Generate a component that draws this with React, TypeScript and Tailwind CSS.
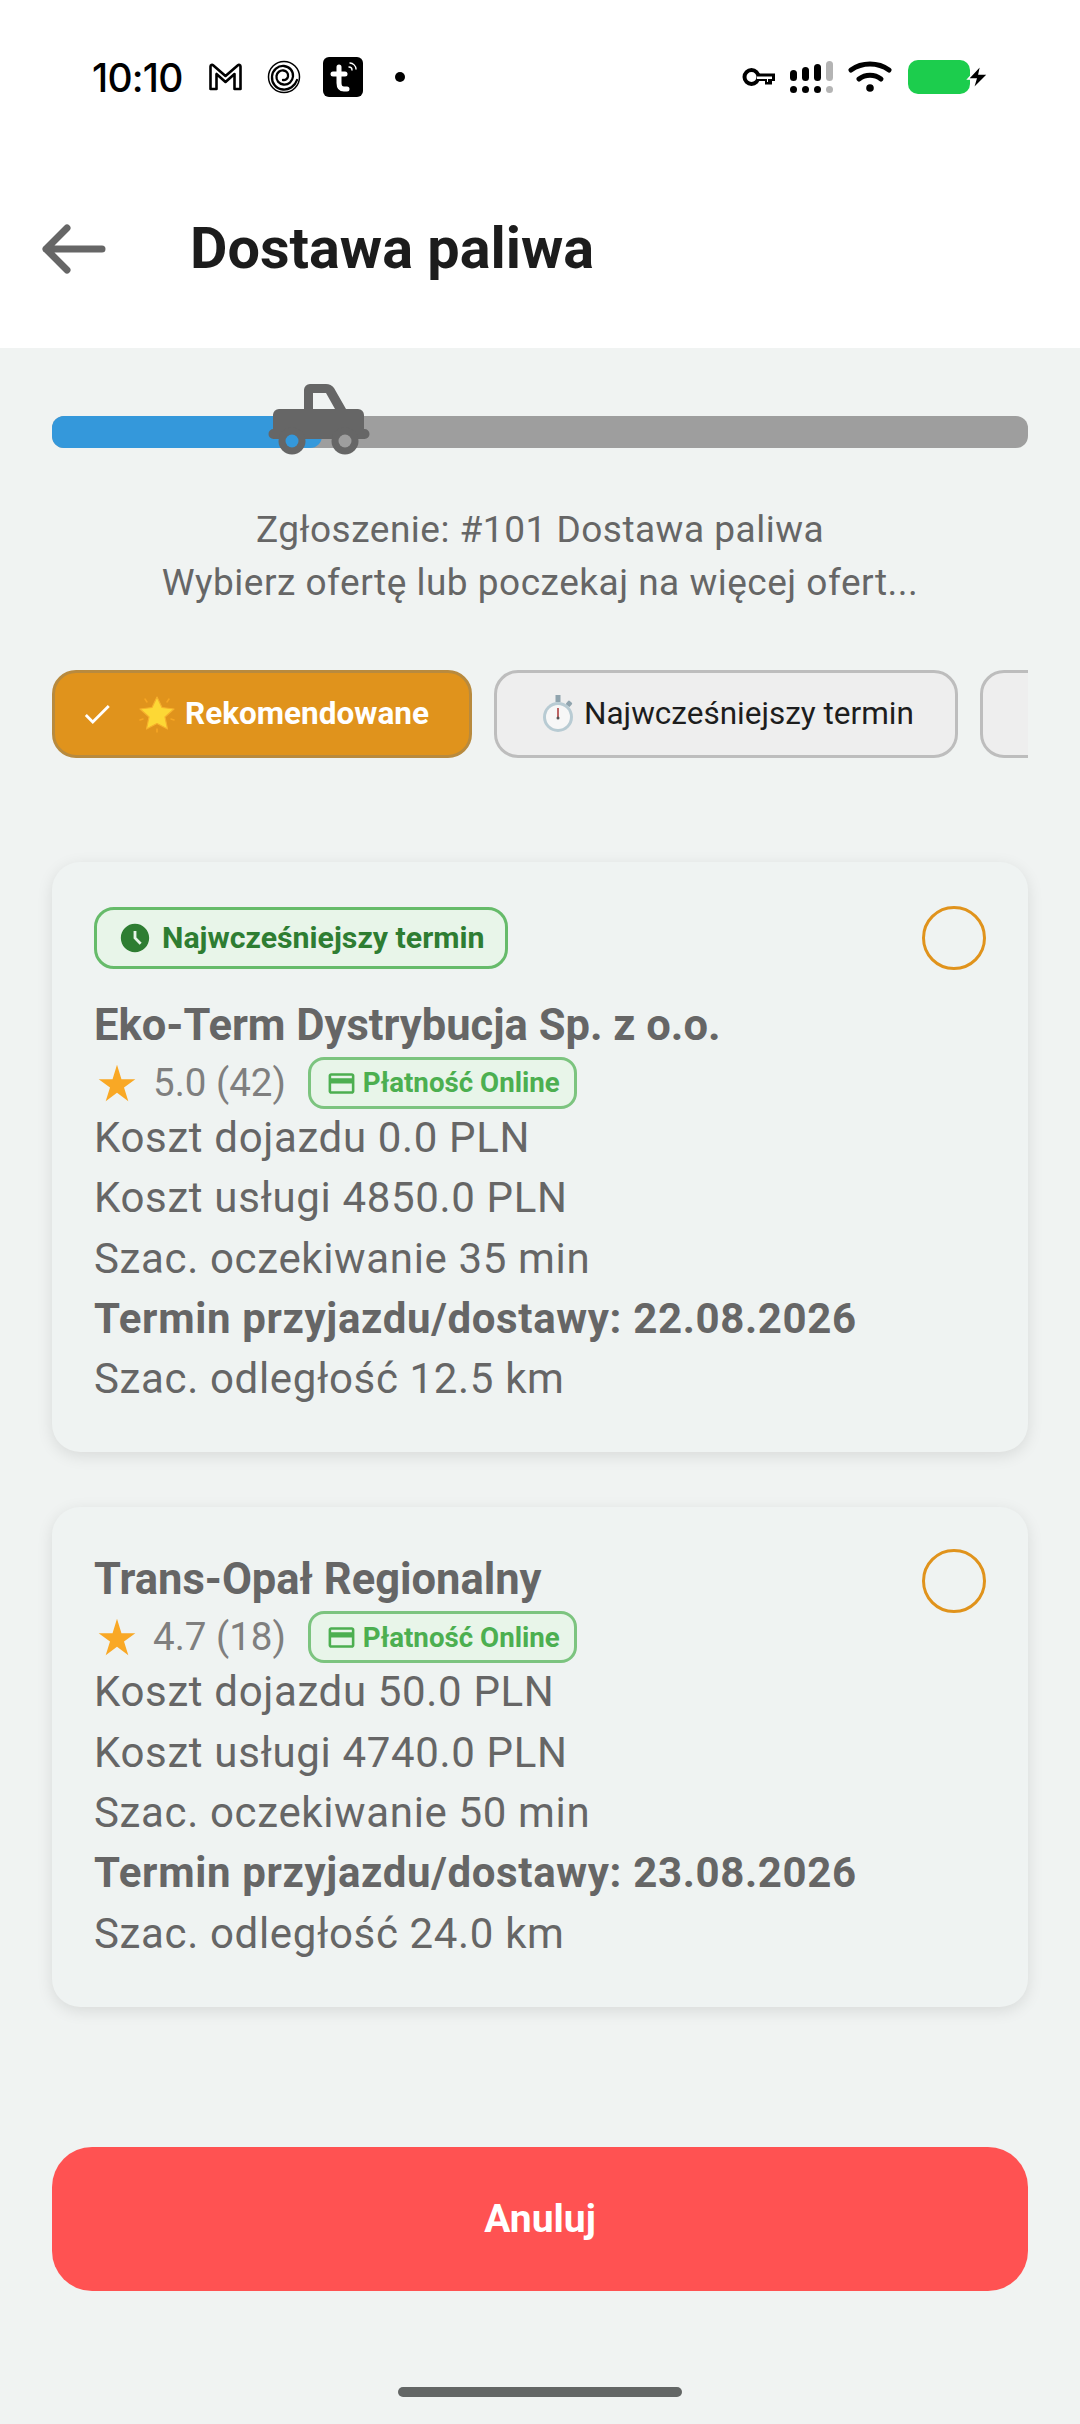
import React from "react";
import { MdAccessTimeFilled, MdStarRate, MdOutlineCreditCard, MdCheck } from "react-icons/md";

const roboto = "font-['Roboto',sans-serif]";

function StatusBar() {
  return (
    <div className="h-[124px] pt-[54px] pl-[92px] pr-[90px] flex items-start justify-between bg-white">
      <div className="flex items-center h-[46px] text-black">
        <span className="font-['Inter',sans-serif] text-[39px] font-medium tracking-[-0.8px] leading-none w-[115px]">10:10</span>
        <svg width="37" height="30" viewBox="0 0 36 30">
          <path d="M3 27V4.500c0-1.500 1.600-2 2.600-1.200L18 14 30.400 3.300C31.400 2.500 33 3 33 4.500V27h-6V12l-9 8-9-8v15z" fill="none" stroke="#000" strokeWidth="2.600" strokeLinejoin="round" />
        </svg>
        <svg width="34" height="34" viewBox="0 0 34 34" className="ml-[23px]" fill="none" stroke="#000">
          <circle cx="17" cy="17" r="15.500" strokeWidth="1.500" />
          <path d="M30 20c-2 6-8 10-14 9.500C9 29 4.500 23 5 16.500 5.500 10 11 5.500 17 6c5.500.5 9.500 5 9 10.500-.5 5-4.500 8.500-9.500 8-4.500-.5-7.500-4-7-8.500.5-3.500 3.500-6 7-5.500 3 .5 5 3 4.500 6-.5 2.500-2.500 4-5 3.500" strokeWidth="2.300" strokeLinecap="round" />
        </svg>
        <div className="ml-[22px] w-[40px] h-[40px] rounded-[6px] bg-black">
          <svg width="40" height="40" viewBox="0 0 40 40" fill="none" stroke="#fff" strokeLinecap="round">
            <path d="M16 10v16c0 4 2 6 5 6h3" strokeWidth="5" />
            <path d="M10 17h12" strokeWidth="5" />
            <path d="M27 6c3 0 6 3 6 6M26 10c2 0 3 1 3 3" strokeWidth="1.400" />
          </svg>
        </div>
        <div className="ml-[32px] w-[10px] h-[10px] rounded-full bg-black" />
      </div>
      <div className="flex items-center h-[46px]">
        <svg width="34" height="20" viewBox="0 0 34 20" fill="none">
          <circle cx="9.500" cy="10" r="7" stroke="#000" strokeWidth="4" />
          <path d="M15 6.500h18v7.500h-3v3.500h-7V14h-8z" fill="#000" />
          <path d="M15 9.500h15v2.500h-4v3h-1v-3H15z" fill="#fff" />
        </svg>
        <div className="ml-[14px] flex items-end gap-[5px] h-[32px]">
          {[11, 14, 17, 20].map((h, i) => (
            <div key={i} className="flex flex-col items-center gap-[5px] w-[7px]">
              <div className={`w-[7px] rounded-full ${i === 3 ? "bg-[#b4b4b4]" : "bg-black"}`} style={{ height: h }} />
              <div className={`w-[7px] h-[7px] rounded-full ${i === 3 ? "bg-[#b4b4b4]" : "bg-black"}`} />
            </div>
          ))}
        </div>
        <svg width="44" height="32" viewBox="0 0 44 32" className="ml-[15px]" fill="none" stroke="#000" strokeWidth="5" strokeLinecap="round">
          <path d="M3 9c11-8 27-8 38 0" />
          <path d="M11 18c6.500-5 15.500-5 22 0" />
          <circle cx="22" cy="27" r="3.800" fill="#000" stroke="none" />
        </svg>
        <div className="ml-[16px] w-[62px] h-[34px] rounded-[10px] bg-[#1ccd4d]" />
        <svg width="24" height="28" viewBox="0 0 24 28" className="ml-[-4px]">
          <path d="M15 2 2 16h8l-3 10 15-15h-9z" fill="#000" stroke="#fff" strokeWidth="1.500" />
        </svg>
      </div>
    </div>
  );
}

function Truck() {
  return (
    <svg width="102" height="72" viewBox="0 0 102 72" className="absolute left-[216px] top-[-32px]">
      <path d="M36 25V6a6 6 0 0 1 6-6H58q5 0 8 4L78 25H90a6 6 0 0 1 6 6V45h.5a5 5 0 0 1 0 10H5.500a5 5 0 0 1 0-10H5V31a6 6 0 0 1 6-6z" fill="#666" />
      <path d="M45 25V9H58L67 25z" fill="#f0f3f2" />
      <circle cx="24" cy="57" r="13.500" fill="#666" />
      <circle cx="24" cy="57" r="6.500" fill="#3498db" />
      <circle cx="77" cy="57" r="13.500" fill="#666" />
      <circle cx="77" cy="57" r="6.500" fill="#9e9e9e" />
    </svg>
  );
}

function StarEmoji() {
  return (
    <svg width="36" height="37" viewBox="0 0 36 37" className="shrink-0">
      <path d="M18 1l5 10.500 12 1.500-9 8 2.500 12L18 27.500 7.500 33 10 21 1 13l12-1.500z" fill="#fdd835" stroke="#f6b02c" strokeWidth="1.200" strokeLinejoin="round" />
      <path d="M6 3l2 3M30 3l-2 3M1 24l3-1M35 24l-3-1M18 33v3" stroke="#f6a623" strokeWidth="1.500" strokeLinecap="round" />
    </svg>
  );
}

function StopwatchEmoji() {
  return (
    <svg width="32" height="38" viewBox="0 0 32 38" className="shrink-0">
      <rect x="13.500" y="0" width="5" height="7" fill="#90a4ae" />
      <rect x="25" y="6" width="5" height="5" rx="1" fill="#90a4ae" transform="rotate(40 27 8)" />
      <circle cx="16" cy="22" r="15" fill="#b8cbd3" />
      <circle cx="16" cy="22" r="12" fill="#f7f7f7" />
      <path d="M16 13v10" stroke="#a33" strokeWidth="1.500" />
      <circle cx="16" cy="23" r="1.500" fill="#555" />
    </svg>
  );
}

function Filters() {
  return (
    <div className="mt-[61px] mx-[52px] h-[88px] overflow-hidden flex gap-[22px] shrink-0">
      <div className="shrink-0 w-[420px] h-[88px] rounded-[24px] bg-[#e0931c] border-[3px] border-[#b88a3e] flex items-center pl-[25px] text-white">
        <MdCheck size={34} />
        <span className="ml-[25px] flex items-center gap-[10px] text-[31.500px] font-bold leading-none">
          <StarEmoji />
          Rekomendowane
        </span>
      </div>
      <div className="shrink-0 w-[464px] h-[88px] rounded-[24px] bg-[#eeeeee] border-[3px] border-[#bdbdbd] flex items-center pl-[45px] text-[#1d1d1d]">
        <span className="flex items-center gap-[10px] text-[31.500px] leading-none">
          <StopwatchEmoji />
          Najwcześniejszy termin
        </span>
      </div>
      <div className="shrink-0 w-[200px] h-[88px] rounded-[24px] bg-[#eeeeee] border-[3px] border-[#bdbdbd]" />
    </div>
  );
}

function Rating({ value }: { value: string }) {
  return (
    <div className="flex items-center h-[52px] mt-[3px] mb-[-1px]">
      <MdStarRate size={44} className="text-[#f9a825] ml-[1px]" />
      <span className="ml-[14px] text-[38.500px] text-[#7f7f7f] leading-none">{value}</span>
      <div className="ml-[22px] h-[52px] w-[269px] rounded-[16px] border-[3px] border-[#7cc47f] bg-[#e8f5e9] flex items-center pl-[15px] gap-[6px] text-[#4caf50]">
        <MdOutlineCreditCard size={31} />
        <span className="text-[27.700px] font-bold leading-none">Płatność Online</span>
      </div>
    </div>
  );
}

type Offer = {
  name: string;
  rating: string;
  road: string;
  service: string;
  wait: string;
  date: string;
  dist: string;
  badge?: boolean;
};

function OfferCard({ offer }: { offer: Offer }) {
  return (
    <div className="relative mx-[52px] rounded-[28px] bg-[#eff3f2] px-[42px] pt-[45px] pb-[43px] shadow-[0_4px_16px_rgba(0,0,0,0.10)]">
      <div className={`absolute right-[42px] w-[64px] h-[64px] rounded-full border-[3px] border-[#e0931c] ${offer.badge ? "top-[44px]" : "top-[42px]"}`} />
      {offer.badge && (
        <div className="mb-[29px] w-[414px] h-[62px] rounded-[20px] border-[3px] border-[#66bb6a] bg-[#e8f5e9] flex items-center pl-[21px] gap-[10px] text-[#2e7d32]">
          <MdAccessTimeFilled size={34} />
          <span className="text-[30.300px] font-bold leading-none">Najwcześniejszy termin</span>
        </div>
      )}
      <div className="text-[43.500px] font-bold text-[#666666] leading-[56px]">{offer.name}</div>
      <Rating value={offer.rating} />
      <div className="text-[42px] text-[#666666] leading-[60.300px] tracking-[0.65px]">
        <div>{offer.road}</div>
        <div>{offer.service}</div>
        <div>{offer.wait}</div>
        <div className="font-bold">{offer.date}</div>
        <div>{offer.dist}</div>
      </div>
    </div>
  );
}

export default function App() {
  return (
    <div className={`${roboto} w-[1080px] h-[2424px] bg-[#f0f3f2] flex flex-col overflow-hidden`}>
      <div className="bg-white h-[348px] shrink-0">
        <StatusBar />
        <div className="flex items-center h-[250px] pl-[42px]">
          <svg width="64" height="50" viewBox="0 0 64 50" fill="none" stroke="#666" strokeWidth="7" strokeLinecap="round" strokeLinejoin="round" className="shrink-0">
            <path d="M60 25H4M25 4 4 25l21 21" />
          </svg>
          <h1 className="ml-[84px] text-[57.600px] font-bold text-[#1c1c1c] leading-none">Dostawa paliwa</h1>
        </div>
      </div>
      <div className="relative mt-[68px] mx-[52px] h-[32px] rounded-[12px] bg-[#9e9e9e] shrink-0">
        <div className="h-full w-[270px] rounded-[12px] bg-[#3498db]" />
        <Truck />
      </div>
      <div className="mt-[55px] text-center text-[37px] leading-[53px] text-[#666666] tracking-[0.5px]">
        <div>Zgłoszenie: #101 Dostawa paliwa</div>
        <div>Wybierz ofertę lub poczekaj na więcej ofert...</div>
      </div>
      <Filters />
      <div className="mt-[104px] flex flex-col gap-[55px]">
        <OfferCard
          offer={{
            badge: true,
            name: "Eko-Term Dystrybucja Sp. z o.o.",
            rating: "5.0 (42)",
            road: "Koszt dojazdu 0.0 PLN",
            service: "Koszt usługi 4850.0 PLN",
            wait: "Szac. oczekiwanie 35 min",
            date: "Termin przyjazdu/dostawy: 22.08.2026",
            dist: "Szac. odległość 12.5 km",
          }}
        />
        <OfferCard
          offer={{
            name: "Trans-Opał Regionalny",
            rating: "4.7 (18)",
            road: "Koszt dojazdu 50.0 PLN",
            service: "Koszt usługi 4740.0 PLN",
            wait: "Szac. oczekiwanie 50 min",
            date: "Termin przyjazdu/dostawy: 23.08.2026",
            dist: "Szac. odległość 24.0 km",
          }}
        />
      </div>
      <div className="mt-[140px] mx-[52px] h-[144px] rounded-[40px] bg-[#ff5252] flex items-center justify-center text-white text-[39px] font-bold shrink-0">
        Anuluj
      </div>
      <div className="mt-[96px] mx-auto w-[284px] h-[10px] rounded-full bg-[#636665] shrink-0" />
    </div>
  );
}
